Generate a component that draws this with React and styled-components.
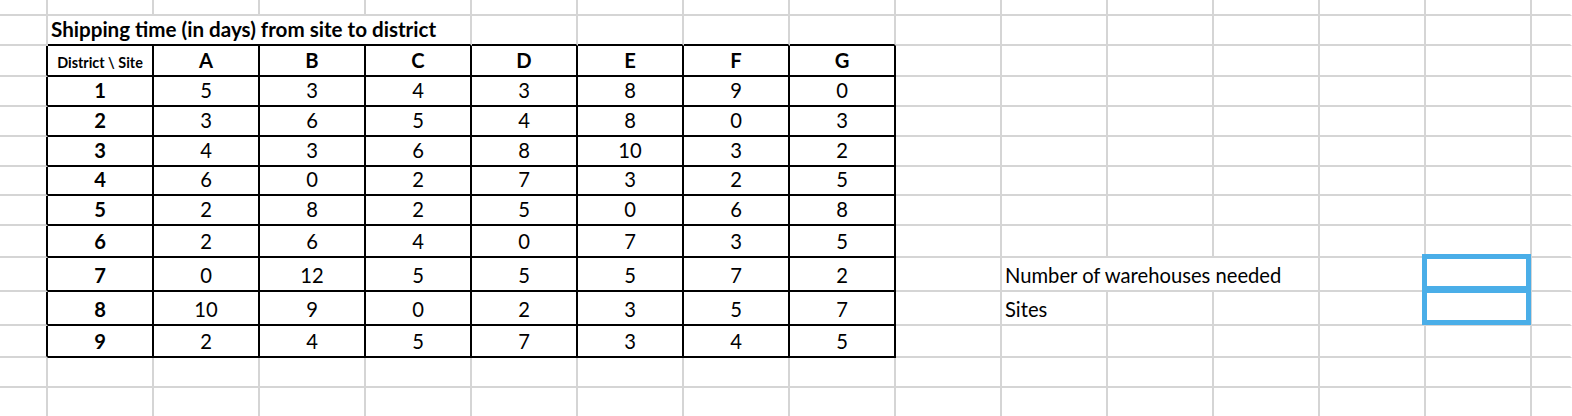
import React from "react";
import styled, { createGlobalStyle } from "styled-components";

const GRID = "#d5d5d5";
const INK = "#000000";
const BLUE = "#4aaee8";

const Global = createGlobalStyle`
  html, body { margin: 0; padding: 0; background: #ffffff; }
  body { font-family: "Lato", "Liberation Sans", sans-serif; color: #000; }
`;

const Sheet = styled.div`
  display: grid;
  grid-template-columns: 48px repeat(14, 106px) 40px;
  grid-template-rows: 16px 30px 31px 30px 30px 30px 29px 30px 32px 34px 34px 32px 30px 30px;
  width: 1572px;
  height: 416px;
  overflow: hidden;
  background: #ffffff;
`;

const borderColor = (kind) => (kind === "ink" ? INK : kind === "none" ? "transparent" : GRID);

const Cell = styled.div`
  position: relative;
  box-sizing: border-box;
  grid-column: span ${(p) => p.$span || 1};
  display: flex;
  align-items: flex-end;
  justify-content: ${(p) => (p.$align === "left" ? "flex-start" : "center")};
  padding: 0 3px ${(p) => (p.$small ? 4 : p.$title ? 2 : 3)}px;
  border-right: 2px solid ${(p) => borderColor(p.$right)};
  border-bottom: 2px solid ${(p) => borderColor(p.$bottom)};
  font-size: ${(p) => (p.$title ? 20.6 : p.$small ? 14.4 : 20.2)}px;
  font-weight: ${(p) => (p.$bold ? 700 : 400)};
  line-height: 1.2;
  white-space: nowrap;
  overflow: visible;
`;

const Selection = styled.div`
  position: absolute;
  top: -4px;
  left: -4px;
  right: -1px;
  bottom: -1px;
  border: 5px solid ${BLUE};
  pointer-events: none;
  z-index: 2;
`;

const SITES = ["A", "B", "C", "D", "E", "F", "G"];
const DATA = [
  [5, 3, 4, 3, 8, 9, 0],
  [3, 6, 5, 4, 8, 0, 3],
  [4, 3, 6, 8, 10, 3, 2],
  [6, 0, 2, 7, 3, 2, 5],
  [2, 8, 2, 5, 0, 6, 8],
  [2, 6, 4, 0, 7, 3, 5],
  [0, 12, 5, 5, 5, 7, 2],
  [10, 9, 0, 2, 3, 5, 7],
  [2, 4, 5, 7, 3, 4, 5],
];

const ROWS = 14;
const COLS = 16;

function buildRow(r) {
  const cells = [];
  const inTable = r >= 2 && r <= 11;
  let c = 0;
  while (c < COLS) {
    const cell = { key: `${r}-${c}`, span: 1, right: "grid", bottom: "grid" };
    if (c === COLS - 1) cell.right = "none";
    if ((r === 1 || inTable) && c >= 1 && c <= 8) cell.bottom = "ink";
    if (inTable && c <= 8) cell.right = "ink";

    if (r === 1 && c === 1) {
      cell.span = 4;
      cell.text = "Shipping time (in days) from site to district";
      cell.bold = true;
      cell.title = true;
      cell.align = "left";
    } else if (r === 2 && c === 1) {
      cell.text = "District \\ Site";
      cell.bold = true;
      cell.small = true;
    } else if (r === 2 && c >= 2 && c <= 8) {
      cell.text = SITES[c - 2];
      cell.bold = true;
    } else if (r >= 3 && r <= 11 && c === 1) {
      cell.text = String(r - 2);
      cell.bold = true;
    } else if (r >= 3 && r <= 11 && c >= 2 && c <= 8) {
      cell.text = String(DATA[r - 3][c - 2]);
    } else if (r === 9 && c === 10) {
      cell.span = 3;
      cell.text = "Number of warehouses needed";
      cell.align = "left";
    } else if (r === 10 && c === 10) {
      cell.text = "Sites";
      cell.align = "left";
    }
    if ((r === 9 || r === 10) && c === 14) cell.selected = true;
    cells.push(cell);
    c += cell.span;
  }
  return cells;
}

export default function App() {
  const rows = [];
  for (let r = 0; r < ROWS; r++) rows.push(...buildRow(r));
  return (
    <>
      <Global />
      <Sheet>
        {rows.map((cell) => (
          <Cell
            key={cell.key}
            $span={cell.span}
            $right={cell.right}
            $bottom={cell.bottom}
            $bold={cell.bold}
            $title={cell.title}
            $small={cell.small}
            $align={cell.align}
          >
            {cell.text}
            {cell.selected && <Selection />}
          </Cell>
        ))}
      </Sheet>
    </>
  );
}
